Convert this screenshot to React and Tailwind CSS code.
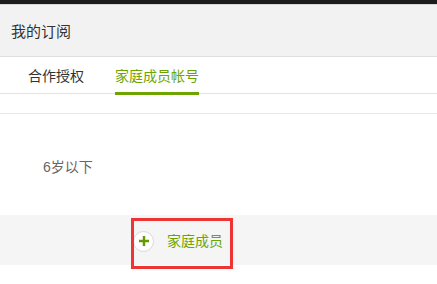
import React from "react";

const App = () => {
  return (
    <div
      className="w-[437px] h-[284px] bg-white overflow-hidden relative"
      style={{ fontFamily: '"Liberation Sans", "Noto Sans CJK SC", sans-serif' }}
    >
      {/* top dark strip */}
      <div className="h-[4px] bg-[#1c1c1c]"></div>
      <div className="h-[1px] bg-[#d6d6d6]"></div>

      {/* title bar */}
      <div className="h-[52px] bg-[#f2f2f2] border-b border-[#dedede] flex items-center pl-[11px] pt-[3px]">
        <span className="text-[15px] text-[#333]">我的订阅</span>
      </div>

      {/* tabs */}
      <div className="h-[37px] border-b border-[#e3e3e3] flex items-end pl-[28px] gap-[31px]">
        <div className="h-full flex items-center text-[14px] text-[#333] pt-[2px]">合作授权</div>
        <div className="h-full flex flex-col justify-end">
          <div className="flex-1 flex items-center text-[14px] text-[#6ea400] pt-[3px]">家庭成员帐号</div>
          <div className="h-[3px] bg-[#6ea400] mb-[-2px]"></div>
        </div>
      </div>

      <div className="h-[20px] border-b border-[#e8e8e8]"></div>

      {/* age row */}
      <div className="h-[101px] flex items-center pl-[43px] pt-[5px]">
        <span className="text-[14px] text-[#666]">6岁以下</span>
      </div>

      {/* add member band */}
      <div className="h-[50px] bg-[#f5f5f5] flex items-center pl-[133px] pt-[2px]">
        <div className="w-[21px] h-[21px] rounded-full bg-white border border-[#d8d8d8] flex items-center justify-center">
          <svg width="12" height="12" viewBox="0 0 12 12">
            <path d="M6 1v10M1 6h10" stroke="#5f9a00" strokeWidth="2.4" />
          </svg>
        </div>
        <span className="ml-[13px] text-[14px] text-[#6ea400]">家庭成员</span>
      </div>

      {/* annotation box */}
      <div className="absolute left-[131px] top-[218px] w-[102px] h-[51px] border-[3px] border-[#ef3434]"></div>
    </div>
  );
};

export default App;
